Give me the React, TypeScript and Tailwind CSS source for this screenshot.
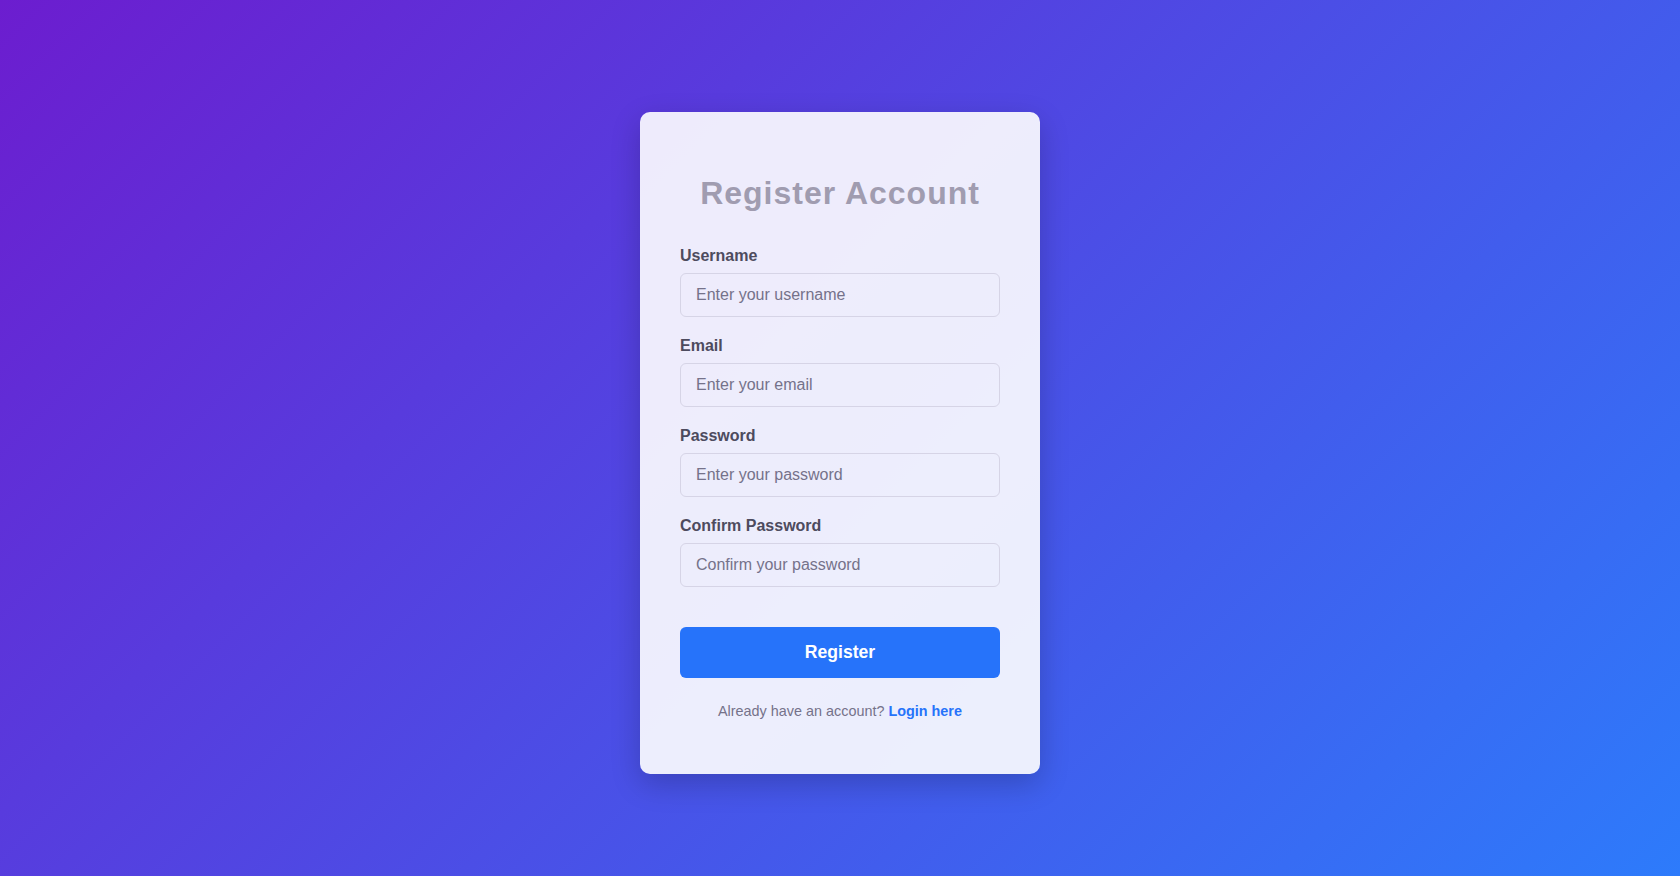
import React from "react";

const fields = [
  { label: "Username", placeholder: "Enter your username", type: "text" },
  { label: "Email", placeholder: "Enter your email", type: "email" },
  { label: "Password", placeholder: "Enter your password", type: "password" },
  { label: "Confirm Password", placeholder: "Confirm your password", type: "password" },
];

export default function App() {
  return (
    <div
      className="min-h-screen w-full flex items-center justify-center pt-[10px] bg-[linear-gradient(135deg,#6c1dcf_0%,#2d7bfb_100%)]"
      style={{ fontFamily: '"Liberation Sans", Arial, sans-serif' }}
    >
      <div className="w-[400px] rounded-[10px] bg-white/90 p-10 shadow-[0_10px_30px_rgba(0,0,0,0.2)]">
        <h2 className="mt-[23px] mb-[35px] text-center text-[32px] leading-[normal] font-bold tracking-[1px] text-[#a09cb0]">
          Register Account
        </h2>
        <form onSubmit={(e) => e.preventDefault()}>
          {fields.map((f) => (
            <div key={f.label} className="mb-5">
              <label className="block mb-2 text-[16px] leading-[normal] font-bold text-[#4d4b5e]">
                {f.label}
              </label>
              <input
                type={f.type}
                placeholder={f.placeholder}
                className="block w-full rounded-[6px] border border-[#d6d4e6] bg-transparent px-[15px] py-3 text-[16px] leading-[normal] text-[#333] placeholder:text-[#75728a] outline-none"
                style={{ fontFamily: '"Liberation Sans", Arial, sans-serif' }}
              />
            </div>
          ))}
          <button
            type="submit"
            className="mt-[40px] block w-full rounded-[6px] bg-[#2673fa] py-[15px] text-[17.6px] leading-[normal] font-bold text-white"
            style={{ fontFamily: '"Liberation Sans", Arial, sans-serif' }}
          >
            Register
          </button>
        </form>
        <p className="mt-[25px] mb-[15px] text-center text-[14.4px] leading-[normal] text-[#75728a]">
          Already have an account?{" "}
          <a href="#" className="font-bold text-[#2673fa]">
            Login here
          </a>
        </p>
      </div>
    </div>
  );
}
